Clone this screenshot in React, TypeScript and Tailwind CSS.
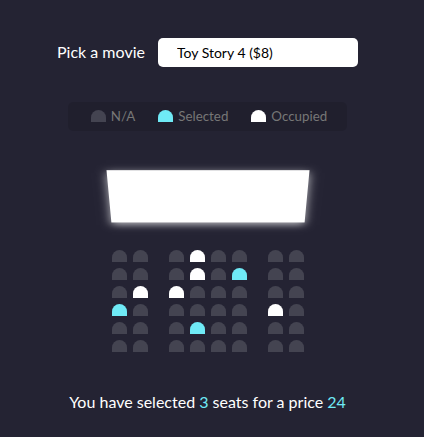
import { useState } from "react"

type SeatState = "free" | "selected" | "occupied"

const movies = [
    { name: "Toy Story 4", price: 8 },
    { name: "Avengers: Endgame", price: 10 },
    { name: "Joker", price: 12 },
    { name: "The Lion King", price: 9 },
]

// o = occupied, s = selected, . = free
const layout = [
    "...o....",
    "...o.s..",
    ".oo.....",
    "s.....o.",
    "...s....",
    "........",
]

function Seat({ state, index, onClick }: { state: SeatState; index?: number; onClick?: () => void }) {
    const color =
        state === "selected" ? "bg-[#6feaf6]" : state === "occupied" ? "bg-white" : "bg-[#444451]"
    const aisle = index === 1 ? "mr-[18px]" : index === 6 ? "ml-[18px]" : ""
    return (
        <div
            onClick={onClick}
            className={`h-[12px] w-[15px] m-[3px] rounded-t-[10px] ${color} ${aisle}`}
        />
    )
}

export default function App() {
    const [movie, setMovie] = useState(0)
    const [seats, setSeats] = useState<SeatState[][]>(
        layout.map((row) =>
            row.split("").map((c) => (c === "o" ? "occupied" : c === "s" ? "selected" : "free"))
        )
    )

    const toggle = (r: number, c: number) => {
        setSeats((prev) =>
            prev.map((row, ri) =>
                row.map((s, ci) => {
                    if (ri !== r || ci !== c || s === "occupied") return s
                    return s === "selected" ? "free" : "selected"
                })
            )
        )
    }

    const count = seats.flat().filter((s) => s === "selected").length

    return (
        <div className="h-screen bg-[#242333] text-white flex flex-col items-center justify-center pr-[9px] font-['Lato',sans-serif]">
            <div className="mt-[20px] mb-[35px] flex items-center">
                <label className="text-[16px]">Pick a movie</label>
                <select
                    value={movie}
                    onChange={(e) => setMovie(Number(e.target.value))}
                    className="ml-[13px] h-[29px] w-[200px] bg-white text-black border-0 rounded-[5px] text-[14px] px-[19px] appearance-none font-['Lato',sans-serif] outline-none"
                >
                    {movies.map((m, i) => (
                        <option key={m.name} value={i}>
                            {m.name} (${m.price})
                        </option>
                    ))}
                </select>
            </div>

            <ul className="mb-[16px] flex bg-black/10 px-[10px] py-[5px] rounded-[5px] text-[#777] list-none">
                <li className="flex items-center mx-[10px]">
                    <Seat state="free" />
                    <small className="ml-[2px] text-[13.33px]">N/A</small>
                </li>
                <li className="flex items-center mx-[10px]">
                    <Seat state="selected" />
                    <small className="ml-[2px] text-[13.33px]">Selected</small>
                </li>
                <li className="flex items-center mx-[10px]">
                    <Seat state="occupied" />
                    <small className="ml-[2px] text-[13.33px]">Occupied</small>
                </li>
            </ul>

            <div className="mb-[30px] [perspective:1000px]">
                <div className="bg-white h-[70px] w-full my-[15px] [transform:rotateX(-45deg)] shadow-[0_3px_10px_rgba(255,255,255,0.7)]" />
                {seats.map((row, r) => (
                    <div key={r} className="flex">
                        {row.map((s, c) => (
                            <Seat key={c} state={s} index={c} onClick={() => toggle(r, c)} />
                        ))}
                    </div>
                ))}
            </div>

            <p className="my-[5px] text-[16px]">
                You have selected <span className="text-[#6feaf6]">{count}</span> seats for a price{" "}
                <span className="text-[#6feaf6]">{count * movies[movie].price}</span>
            </p>
        </div>
    )
}
